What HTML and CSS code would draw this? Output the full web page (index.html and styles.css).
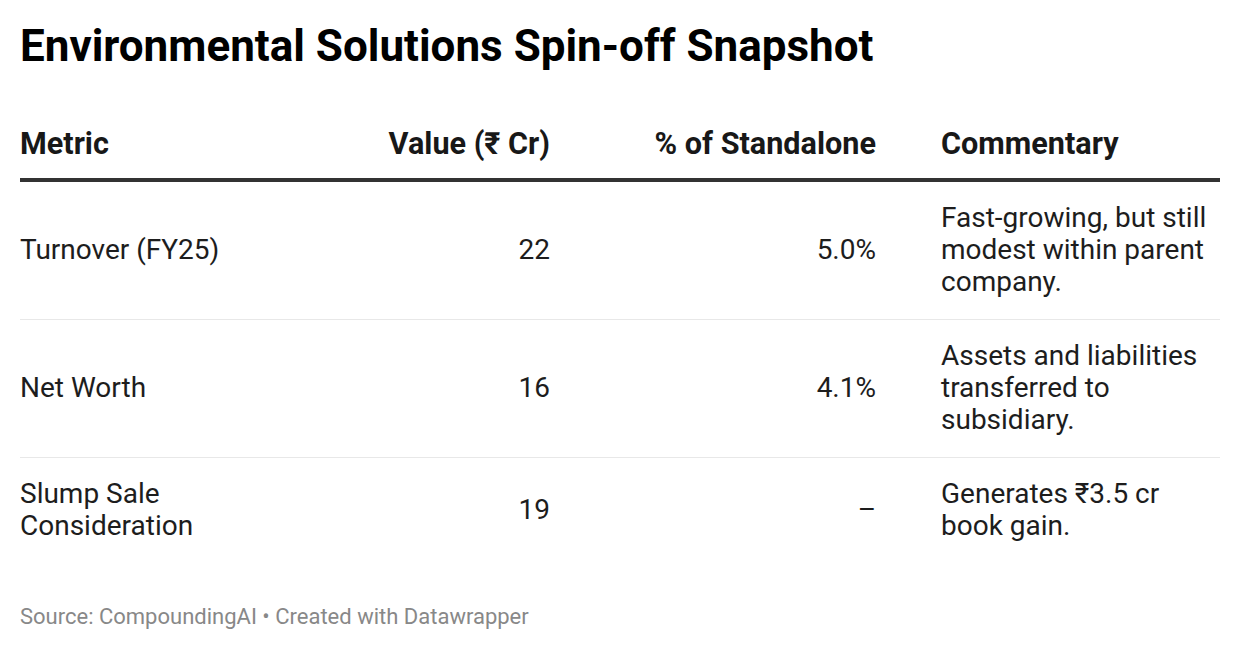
FILE: index.html
```html
<!DOCTYPE html>
<html lang="en">
<head>
<meta charset="utf-8">
<title>Environmental Solutions Spin-off Snapshot</title>
<link rel="stylesheet" href="styles.css">
</head>
<body>
<div class="chart">
  <h1 class="title">Environmental Solutions Spin-off Snapshot</h1>
  <table class="data">
    <colgroup>
      <col class="c-metric">
      <col class="c-value">
      <col class="c-pct">
      <col class="c-comm">
    </colgroup>
    <thead>
      <tr>
        <th class="left">Metric</th>
        <th class="right">Value (₹ Cr)</th>
        <th class="right pct">% of Standalone</th>
        <th class="left comm">Commentary</th>
      </tr>
    </thead>
    <tbody>
      <tr>
        <td class="left">Turnover (FY25)</td>
        <td class="right">22</td>
        <td class="right pct">5.0%</td>
        <td class="left comm">Fast-growing, but still modest within parent company.</td>
      </tr>
      <tr>
        <td class="left">Net Worth</td>
        <td class="right">16</td>
        <td class="right pct">4.1%</td>
        <td class="left comm">Assets and liabilities transferred to subsidiary.</td>
      </tr>
      <tr class="last">
        <td class="left">Slump Sale Consideration</td>
        <td class="right">19</td>
        <td class="right pct">–</td>
        <td class="left comm">Generates ₹3.5 cr book gain.</td>
      </tr>
    </tbody>
  </table>
  <div class="footer">Source: CompoundingAI • Created with Datawrapper</div>
</div>
</body>
</html>
```

FILE: styles.css
```css
html, body {
  margin: 0;
  padding: 0;
  background: #ffffff;
}

body {
  font-family: Roboto, "Liberation Sans", Arial, sans-serif;
  color: #1d1d1d;
}

.chart {
  width: 1200px;
  padding: 20px 20px 0 20px;
}

.title {
  margin: 0;
  font-size: 44px;
  line-height: 52px;
  font-weight: 700;
  color: #000;
}

.data {
  margin-top: 56px;
  width: 1200px;
  border-collapse: collapse;
  table-layout: fixed;
  font-size: 28px;
  line-height: 32px;
}

.c-metric { width: 230px; }
.c-value  { width: 300px; }
.c-pct    { width: 356px; }
.c-comm   { width: 314px; }

th {
  font-size: 30.6px;
  font-weight: 700;
  color: #181818;
  padding: 0 0 18px 0;
  border-bottom: 4px solid #333333;
  vertical-align: bottom;
}

td {
  padding: 20px 0 21px 0;
  vertical-align: middle;
  border-bottom: 1px solid #e8e8e8;
}

tr.last td {
  border-bottom: none;
}

.left { text-align: left; }
.right { text-align: right; }

.pct { padding-right: 30px; }
.comm { padding-left: 35px; }

.footer {
  margin-top: 41px;
  font-size: 22px;
  line-height: 26px;
  color: #888888;
}
```
